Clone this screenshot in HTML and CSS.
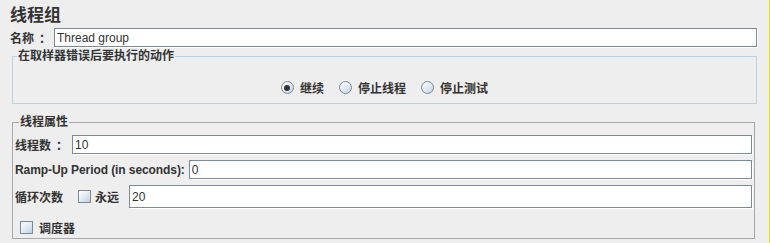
FILE: index.html
```html
<!DOCTYPE html>
<html lang="zh-CN">
<head>
    <meta charset="UTF-8">
    <title>线程组</title>
    <link rel="stylesheet" href="styles.css">
</head>
<body>
    <div class="panel">
        <div class="title">线程组</div>

        <div class="name-row">
            <label class="label name-label">名称<span class="colon">：</span></label>
            <input class="field" type="text" value="Thread group">
        </div>

        <fieldset class="group group-action">
            <legend>在取样器错误后要执行的动作</legend>
            <div class="radios">
                <span class="option"><span class="radio checked"></span>继续</span>
                <span class="option"><span class="radio"></span>停止线程</span>
                <span class="option"><span class="radio"></span>停止测试</span>
            </div>
        </fieldset>

        <fieldset class="group group-thread">
            <legend>线程属性</legend>
            <div class="row">
                <label class="label">线程数<span class="colon">：</span></label>
                <input class="field" type="text" value="10">
            </div>
            <div class="row">
                <label class="label ramp">Ramp-Up Period (in seconds):</label>
                <input class="field" type="text" value="0">
            </div>
            <div class="row loop-row">
                <label class="label">循环次数</label>
                <span class="option forever"><span class="check"></span>永远</span>
                <input class="field tall" type="text" value="20">
            </div>
            <div class="row scheduler-row">
                <span class="option"><span class="check"></span>调度器</span>
            </div>
        </fieldset>
    </div>
</body>
</html>
```

FILE: styles.css
```css
html, body {
    margin: 0;
    padding: 0;
}
body {
    width: 769px;
    height: 243px;
    background: #eeeeee;
    border-right: 1px solid #e4e400;
    font-family: "Liberation Sans", "Noto Sans CJK SC", sans-serif;
    font-size: 12px;
    color: #333333;
    overflow: hidden;
}
.title {
    font-family: "Noto Sans CJK SC", sans-serif;
    font-size: 17px;
    font-weight: bold;
    line-height: 20px;
    padding: 4px 0 0 10px;
    height: 24px;
    box-sizing: border-box;
}
.label {
    font-weight: bold;
    white-space: nowrap;
}
.colon {
    margin-left: 5px;
}
.ramp {
    letter-spacing: -0.08px;
}
.name-row {
    display: flex;
    align-items: center;
    margin: 4px 12px 0 10px;
}
.name-label {
    width: 44px;
}
.field {
    flex: 1;
    min-width: 0;
    height: 19px;
    box-sizing: border-box;
    margin: 0;
    padding: 0 2px;
    border: 1px solid #7a8a99;
    box-shadow: 1px 1px 0 #ffffff;
    background: #ffffff;
    font-family: "Liberation Sans", sans-serif;
    font-size: 12px;
    color: #333333;
    outline: none;
}
.field.tall {
    height: 23px;
}
.group {
    margin: 0 12px;
    padding: 0;
    min-width: 0;
}
.group legend {
    font-weight: bold;
    padding: 0 1px;
    margin-left: 4px;
    line-height: 14px;
}
.group-action {
    margin-top: 2px;
    border: 1px solid #b8cfe5;
    height: 55px;
    box-sizing: border-box;
}
.radios {
    display: flex;
    justify-content: center;
    gap: 15px;
    padding-top: 16px;
}
.option {
    display: inline-flex;
    align-items: center;
    gap: 6px;
    font-weight: bold;
    white-space: nowrap;
}
.radio {
    width: 11px;
    height: 11px;
    border: 1px solid #7a8a99;
    border-radius: 50%;
    background: linear-gradient(135deg, #ffffff 0%, #dce6f0 60%, #b8cfe5 100%);
    position: relative;
}
.radio.checked::after {
    content: "";
    position: absolute;
    left: 2.5px;
    top: 2.5px;
    width: 6px;
    height: 6px;
    border-radius: 50%;
    background: #333333;
}
.check {
    width: 11px;
    height: 11px;
    border: 1px solid #7a8a99;
    background: linear-gradient(135deg, #ffffff 0%, #dce6f0 60%, #b8cfe5 100%);
}
.group-thread {
    margin-top: 11px;
    margin-right: 14px;
    border: 1px solid #a8a8a8;
    height: 124px;
    box-sizing: border-box;
    padding: 6px 2px 0 2px;
}
.row {
    display: flex;
    align-items: center;
    gap: 4px;
    margin-bottom: 6px;
}
.loop-row .forever {
    margin-left: 11px;
    margin-right: 6px;
    gap: 4px;
}
.scheduler-row {
    padding: 5px 0 0 5px;
}
```
